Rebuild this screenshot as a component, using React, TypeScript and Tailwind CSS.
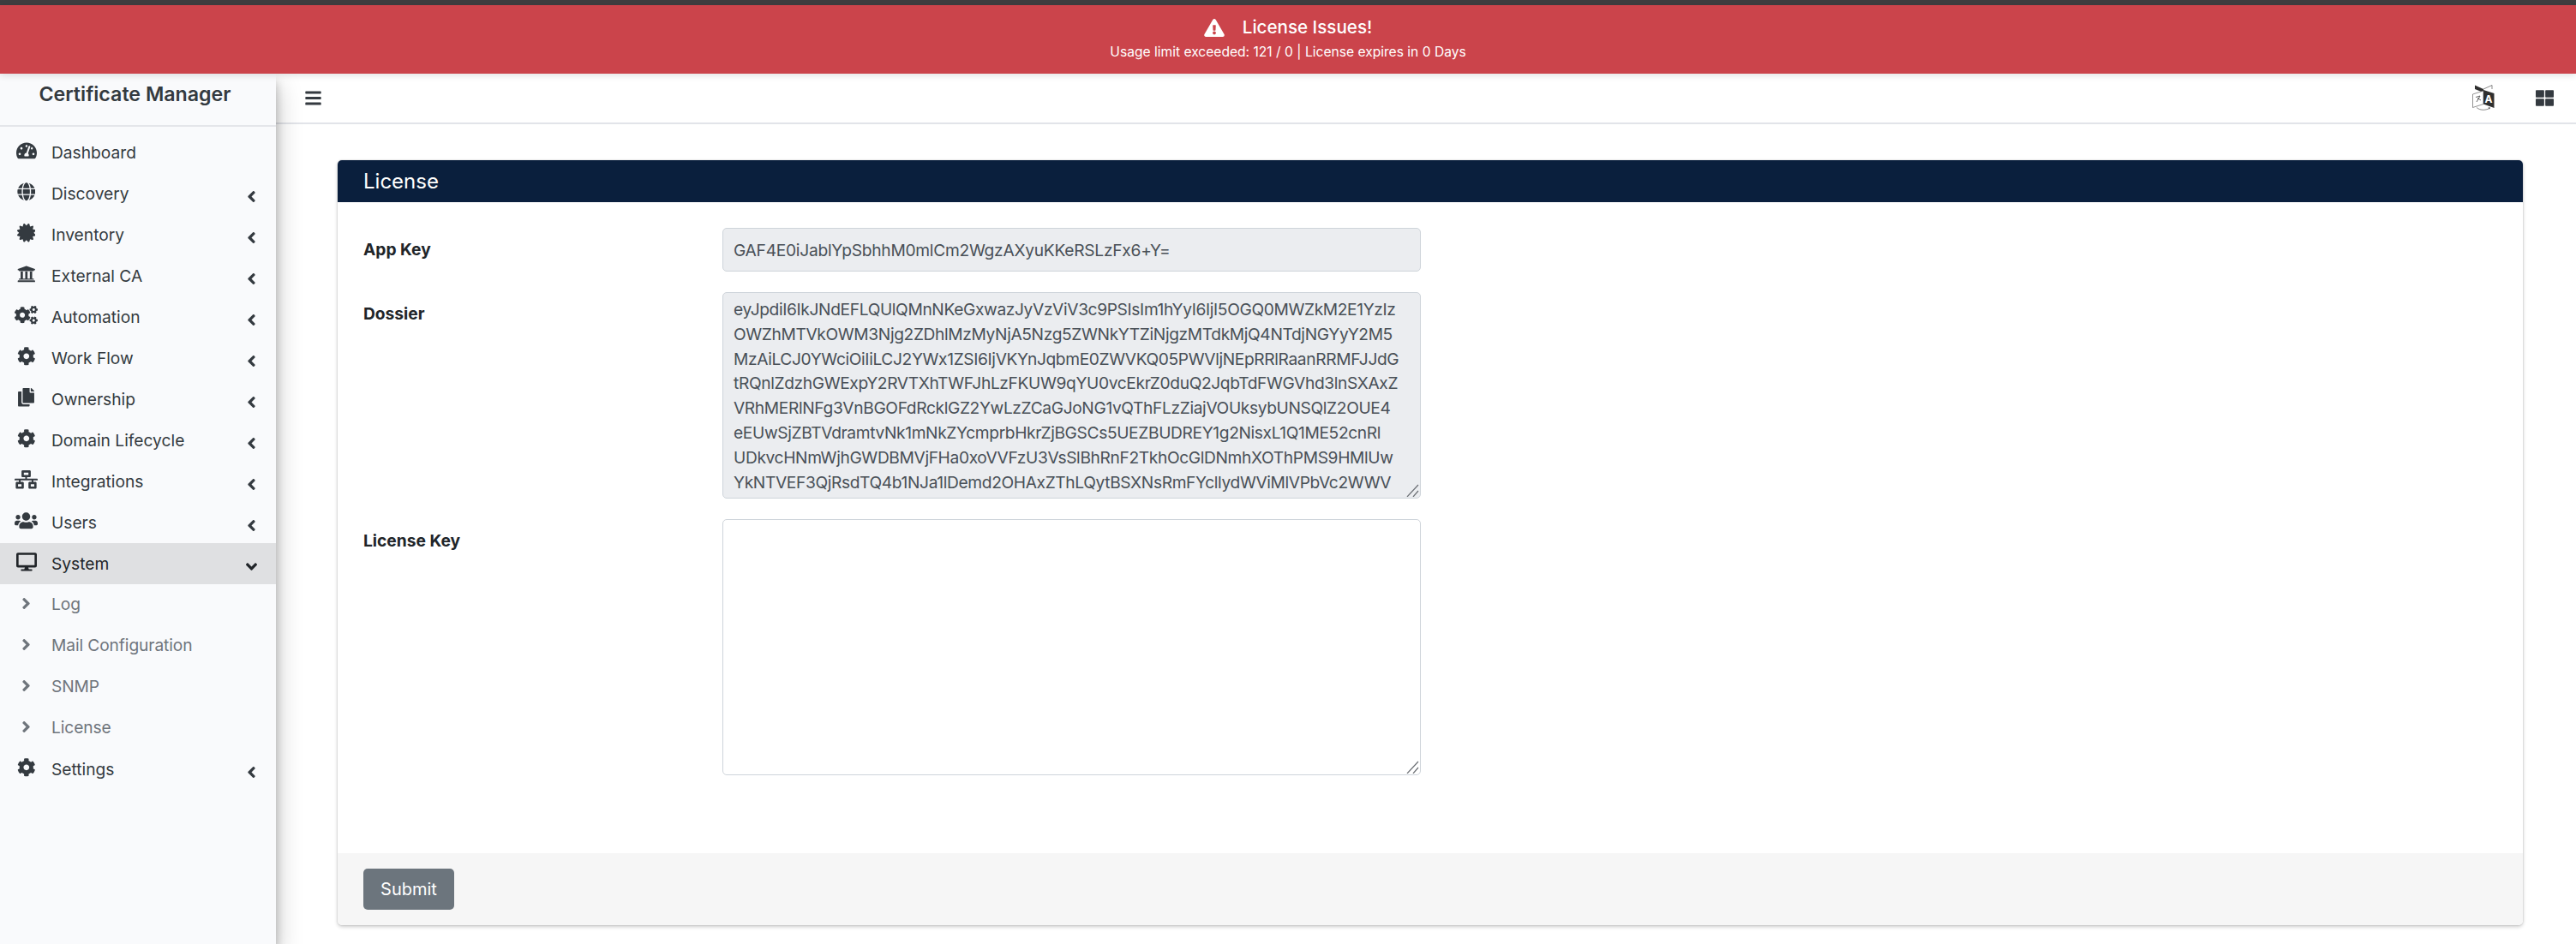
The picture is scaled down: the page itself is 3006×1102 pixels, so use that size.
import { ReactNode } from 'react';
import {
  FaAngleDown,
  FaAngleLeft,
  FaAngleRight,
  FaBars,
  FaCertificate,
  FaCog,
  FaCogs,
  FaCopy,
  FaDesktop,
  FaExclamationTriangle,
  FaGlobe,
  FaNetworkWired,
  FaTachometerAlt,
  FaThLarge,
  FaUniversity,
  FaUsers,
} from 'react-icons/fa';

const navTop = [
  { icon: FaTachometerAlt, size: 'h-[21.6px] w-6', label: 'Dashboard', arrow: false },
  { icon: FaGlobe, size: 'h-[21.6px] w-[21.6px]', label: 'Discovery', arrow: true },
  { icon: FaCertificate, size: 'h-[21.6px] w-[21.6px]', label: 'Inventory', arrow: true },
  { icon: FaUniversity, size: 'h-[21.6px] w-[21.6px]', label: 'External CA', arrow: true },
  { icon: FaCogs, size: 'h-[21.6px] w-[27px]', label: 'Automation', arrow: true },
  { icon: FaCog, size: 'h-[21.6px] w-[21.6px]', label: 'Work Flow', arrow: true },
  { icon: FaCopy, size: 'h-[21.6px] w-[19px]', label: 'Ownership', arrow: true },
  { icon: FaCog, size: 'h-[21.6px] w-[21.6px]', label: 'Domain Lifecycle', arrow: true },
  { icon: FaNetworkWired, size: 'h-[21.6px] w-[27px]', label: 'Integrations', arrow: true },
  { icon: FaUsers, size: 'h-[21.6px] w-[27px]', label: 'Users', arrow: true },
];

const systemItems = ['Log', 'Mail Configuration', 'SNMP', 'License'];

const appKey = 'GAF4E0iJablYpSbhhM0mlCm2WgzAXyuKKeRSLzFx6+Y=';

const dossier = [
  'eyJpdiI6IkJNdEFLQUlQMnNKeGxwazJyVzViV3c9PSIsIm1hYyI6IjI5OGQ0MWZkM2E1YzIz',
  'OWZhMTVkOWM3Njg2ZDhlMzMyNjA5Nzg5ZWNkYTZiNjgzMTdkMjQ4NTdjNGYyY2M5',
  'MzAiLCJ0YWciOiIiLCJ2YWx1ZSI6IjVKYnJqbmE0ZWVKQ05PWVljNEpRRlRaanRRMFJJdG',
  'tRQnlZdzhGWExpY2RVTXhTWFJhLzFKUW9qYU0vcEkrZ0duQ2JqbTdFWGVhd3lnSXAxZ',
  'VRhMERlNFg3VnBGOFdRcklGZ2YwLzZCaGJoNG1vQThFLzZiajVOUksybUNSQlZ2OUE4',
  'eEUwSjZBTVdramtvNk1mNkZYcmprbHkrZjBGSCs5UEZBUDREY1g2NisxL1Q1ME52cnRl',
  'UDkvcHNmWjhGWDBMVjFHa0xoVVFzU3VsSlBhRnF2TkhOcGlDNmhXOThPMS9HMlUw',
  'YkNTVEF3QjRsdTQ4b1NJa1lDemd2OHAxZThLQytBSXNsRmFYcllydWViMlVPbVc2WWV',
].join('\n');

function NavRow({ icon: Icon, size, label, arrow }: { icon: typeof FaCog; size: string; label: string; arrow: boolean }) {
  return (
    <div className="flex h-12 items-center text-[#343a40]">
      <span className="ml-[17px] flex w-[27px] -translate-y-0.5 justify-center">
        <Icon className={size} />
      </span>
      <span className="ml-4 flex-1">{label}</span>
      {arrow && <FaAngleLeft className="mr-[22px] h-[21px] w-[13px] translate-y-[3px]" />}
    </div>
  );
}

function FormRow({ label, children }: { label: string; children: ReactNode }) {
  return (
    <div className="flex items-start">
      <label className="w-[419px] pt-[11px] font-bold text-[#212529]">{label}</label>
      {children}
    </div>
  );
}

function ResizeHandle() {
  return (
    <svg viewBox="0 0 15 15" className="pointer-events-none absolute right-[2px] bottom-[2px] h-[15px] w-[15px]">
      <path d="M1 15 L14 1 M8 15 L14 8" fill="none" stroke="#6b6f74" strokeWidth="1.2" />
    </svg>
  );
}

function LanguageIcon() {
  return (
    <svg viewBox="0 0 26 31" className="h-[31px] w-[26px]">
      <path d="M3 0.5 L13 5 L13 9 L3 5 Z" fill="#2f2f2f" />
      <path d="M13 5 L23 0.5 L23 5" fill="none" stroke="#555" strokeWidth="0.7" />
      <path d="M13 7 L0.5 11 L0.5 26.5 L13 22.5 Z" fill="#fff" stroke="#666" strokeWidth="0.7" />
      <path d="M13 6 L25.5 10 L25.5 27 L13 22.5 Z" fill="#2f2f2f" />
      <path d="M4 14.5 L9 13 L6.5 17.5 M6 15.5 L10 18 M5 20 L7 16.5" fill="none" stroke="#444" strokeWidth="0.8" />
      <text x="19" y="20.5" textAnchor="middle" fill="#fff" fontSize="12" fontWeight="700" fontFamily="Inter, sans-serif">
        A
      </text>
      <path d="M5 26.5 C9 30 15 30 20 27.5" fill="none" stroke="#555" strokeWidth="0.7" />
      <path d="M18.5 26.5 L21 26.5 L20 28.5 Z" fill="#333" />
    </svg>
  );
}

export default function App() {
  return (
    <div className="flex h-[1102px] flex-col overflow-hidden bg-white font-['Inter',sans-serif] text-[19.2px] leading-[28.8px]">
      <div className="h-1.5 bg-[#3e3e40]" />

      {/* licence banner */}
      <div className="relative z-20 flex h-20 flex-col items-center bg-[#cb444b] pt-[11px] text-white shadow-[0_2px_8px_rgba(0,0,0,0.12)]">
        <div className="flex items-center text-[20.6px] font-medium leading-[30px]">
          <FaExclamationTriangle className="mr-[21px] h-[21px] w-6" />
          <span>License Issues!</span>
        </div>
        <div className="mt-[2px] text-[15.6px] leading-6">Usage limit exceeded: 121 / 0 | License expires in 0 Days</div>
      </div>

      <div className="flex min-h-0 flex-1">
        {/* sidebar */}
        <aside className="relative z-10 w-[322px] shrink-0 bg-[#f9fafc] shadow-[0_14px_28px_rgba(0,0,0,0.25),0_10px_10px_rgba(0,0,0,0.22)]">
          <div className="h-[62px] border-b-2 border-[#e4e6ea] pt-[10px] pr-[7px] text-center text-[23.2px] font-semibold text-[#343a40]">
            Certificate Manager
          </div>
          <nav className="pt-1.5">
            {navTop.map((item) => (
              <NavRow key={item.label} {...item} />
            ))}
            <div className="flex h-12 items-center bg-[#dfe0e2] text-[#212529]">
              <span className="ml-[17px] flex w-[27px] -translate-y-0.5 justify-center">
                <FaDesktop className="h-[21.6px] w-6" />
              </span>
              <span className="ml-4 flex-1">System</span>
              <FaAngleDown className="mr-[21px] h-[21px] w-[15px] translate-y-[3px]" />
            </div>
            {systemItems.map((label) => (
              <div key={label} className="flex h-12 items-center text-[#6f757c]">
                <span className="ml-[17px] flex w-[27px] -translate-y-0.5 justify-center">
                  <FaAngleRight className="h-[21px] w-[13px]" />
                </span>
                <span className="ml-4 -translate-y-px tracking-[-0.1px]">{label}</span>
              </div>
            ))}
            <NavRow icon={FaCog} size="h-[21.6px] w-[21.6px]" label="Settings" arrow />
          </nav>
        </aside>

        {/* main column */}
        <main className="min-w-0 flex-1">
          <header className="flex h-[59px] items-center border-b-2 border-[#e2e4e9] pr-[26px] pl-[34px]">
            <FaBars className="h-[21px] w-[19px] text-[#343a40]" />
            <div className="ml-auto flex items-center gap-12">
              <LanguageIcon />
              <FaThLarge className="h-[21px] w-[21px] text-[#343a40]" />
            </div>
          </header>

          <section className="pt-[42px] pr-[62px] pl-[72px]">
            <div className="overflow-hidden rounded-[5px] bg-white shadow-[0_0_2px_rgba(0,0,0,0.2),0_2px_4px_rgba(0,0,0,0.2)]">
              <div className="flex h-[49px] items-center bg-[#0a1f3d] px-[30px] text-[24px] leading-9 text-white">License</div>

              <div className="flex flex-col gap-6 pt-[30px] pr-[30px] pb-[91px] pl-[30px]">
                <FormRow label="App Key">
                  <input
                    readOnly
                    value={appKey}
                    className="h-[51px] w-[815px] rounded-[5px] border border-[#ced4da] bg-[#ebedf0] px-3 tracking-[-0.27px] text-[#495057] outline-none"
                  />
                </FormRow>
                <FormRow label="Dossier">
                  <div className="relative">
                    <textarea
                      readOnly
                      wrap="off"
                      value={dossier}
                      className="block h-[241px] w-[815px] resize-none overflow-hidden rounded-[5px] border border-[#ced4da] bg-[#ebedf0] px-3 pt-[5px] pb-1.5 tracking-[-0.37px] text-[#495057] outline-none"
                    />
                    <ResizeHandle />
                  </div>
                </FormRow>
                <FormRow label="License Key">
                  <div className="relative">
                    <textarea className="block h-[299px] w-[815px] resize-none rounded-[5px] border border-[#ced4da] bg-white px-3 py-1.5 outline-none" />
                    <ResizeHandle />
                  </div>
                </FormRow>
              </div>

              <div className="flex h-[84px] items-center bg-[#f6f6f6] px-[30px]">
                <button className="h-12 w-[106px] rounded-[5px] bg-[#6c757d] text-[20px] text-white">Submit</button>
              </div>
            </div>
          </section>
        </main>
      </div>
    </div>
  );
}
